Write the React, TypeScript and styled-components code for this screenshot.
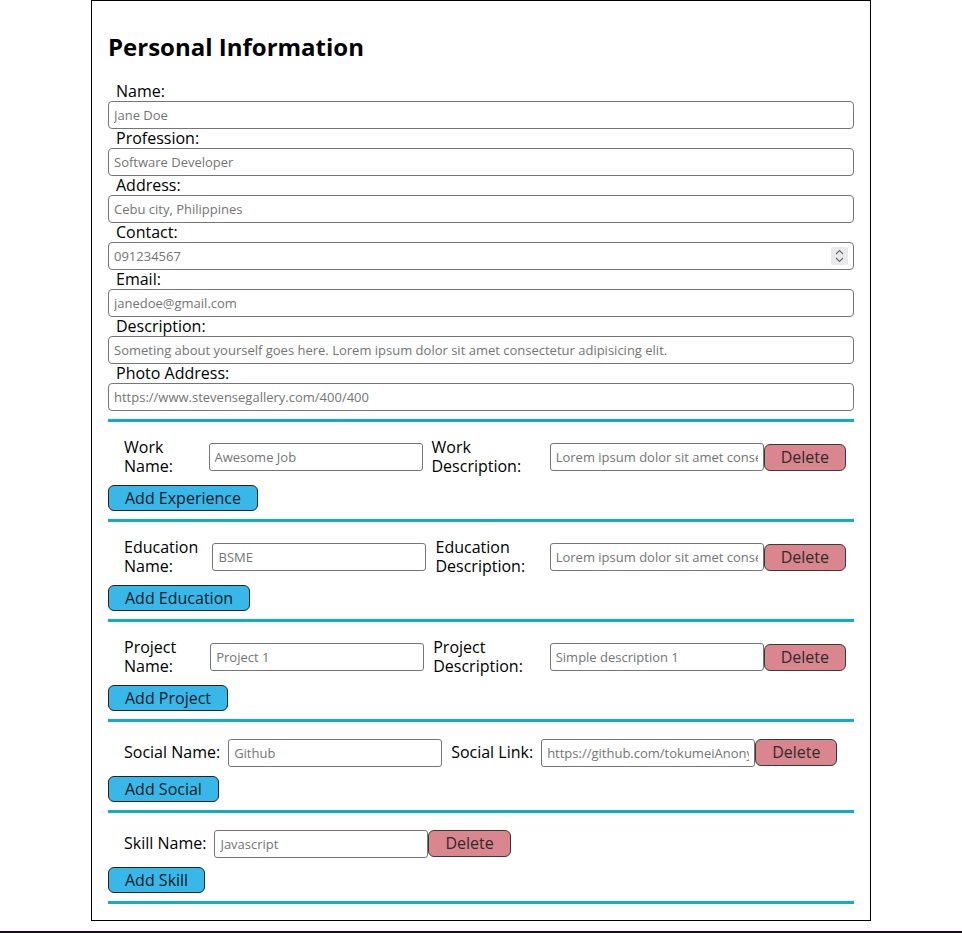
import React from "react";
import styled, { createGlobalStyle } from "styled-components";

const GlobalStyle = createGlobalStyle`
  body {
    margin: 0;
    font-family: "Open Sans", "Noto Sans", sans-serif;
    color: #000;
    background: #fff;
  }
`;

type Entry = {
  key: string;
  first: { label: string; placeholder: string };
  second?: { label: string; placeholder: string };
  addLabel: string;
};

const sections: Entry[] = [
  {
    key: "work",
    first: { label: "Work Name:", placeholder: "Awesome Job" },
    second: {
      label: "Work Description:",
      placeholder: "Lorem ipsum dolor sit amet consectetur",
    },
    addLabel: "Add Experience",
  },
  {
    key: "education",
    first: { label: "Education Name:", placeholder: "BSME" },
    second: {
      label: "Education Description:",
      placeholder: "Lorem ipsum dolor sit amet consectetur",
    },
    addLabel: "Add Education",
  },
  {
    key: "project",
    first: { label: "Project Name:", placeholder: "Project 1" },
    second: { label: "Project Description:", placeholder: "Simple description 1" },
    addLabel: "Add Project",
  },
  {
    key: "social",
    first: { label: "Social Name:", placeholder: "Github" },
    second: {
      label: "Social Link:",
      placeholder: "https://github.com/tokumeiAnonymous",
    },
    addLabel: "Add Social",
  },
  {
    key: "skill",
    first: { label: "Skill Name:", placeholder: "Javascript" },
    addLabel: "Add Skill",
  },
];

const personalFields = [
  { label: "Name:", placeholder: "Jane Doe", type: "text" },
  { label: "Profession:", placeholder: "Software Developer", type: "text" },
  { label: "Address:", placeholder: "Cebu city, Philippines", type: "text" },
  { label: "Contact:", placeholder: "091234567", type: "number" },
  { label: "Email:", placeholder: "janedoe@gmail.com", type: "email" },
  {
    label: "Description:",
    placeholder:
      "Someting about yourself goes here. Lorem ipsum dolor sit amet consectetur adipisicing elit.",
    type: "text",
  },
  {
    label: "Photo Address:",
    placeholder: "https://www.stevensegallery.com/400/400",
    type: "text",
  },
];

// number spinner, drawn so it shows without hover
const Spinner = () => (
  <SpinBox>
    <svg width="9" height="14" viewBox="0 0 9 14" fill="none">
      <path d="M1 5 L4.5 1.5 L8 5" stroke="#6b6b6b" strokeWidth="1.1" />
      <path d="M1 9 L4.5 12.5 L8 9" stroke="#6b6b6b" strokeWidth="1.1" />
    </svg>
  </SpinBox>
);

export default function App() {
  return (
    <>
      <GlobalStyle />
      <FormContainer>
        <Heading>Personal Information</Heading>
        <PersonalSection>
          {personalFields.map((f) => (
            <Field key={f.label}>
              <StackLabel>{f.label}</StackLabel>
              <WideInput type={f.type} placeholder={f.placeholder} />
              {f.type === "number" && <Spinner />}
            </Field>
          ))}
        </PersonalSection>
        {sections.map((s) => (
          <Section key={s.key}>
            <Row>
              <RowLabel>{s.first.label}</RowLabel>
              <RowInput placeholder={s.first.placeholder} />
              {s.second && (
                <>
                  <RowLabel>{s.second.label}</RowLabel>
                  <RowInput placeholder={s.second.placeholder} />
                </>
              )}
              <DeleteButton>Delete</DeleteButton>
            </Row>
            <AddButton>{s.addLabel}</AddButton>
          </Section>
        ))}
      </FormContainer>
      <Preview />
    </>
  );
}

const FormContainer = styled.div`
  width: 780px;
  box-sizing: border-box;
  margin: 0 auto;
  border: 1px solid #000;
  padding: 0 16px 16px;
`;

const Heading = styled.h2`
  font-size: 24px;
  font-weight: bold;
  line-height: 28px;
  margin: 0;
  padding: 32px 0 21px;
`;

const PersonalSection = styled.div`
  padding-bottom: 8px;
  border-bottom: 3px solid #13adbf;
`;

const Field = styled.div`
  position: relative;
`;

const Section = styled.div`
  display: flex;
  flex-direction: column;
  align-items: flex-start;
  gap: 9px;
  padding: 16px 0 8px;
  border-bottom: 3px solid #13adbf;
`;

const StackLabel = styled.label`
  display: block;
  font-size: 16px;
  line-height: 19px;
  padding-left: 8px;
`;

const WideInput = styled.input`
  display: block;
  width: 100%;
  height: 28px;
  box-sizing: border-box;
  margin: 0;
  padding: 0 5px;
  border: 1px solid #767676;
  border-radius: 4px;
  font-family: inherit;
  font-size: 13px;

  &::placeholder {
    color: #757575;
  }
  &::-webkit-inner-spin-button {
    display: none;
  }
`;

const SpinBox = styled.div`
  position: absolute;
  right: 6px;
  bottom: 5px;
  width: 17px;
  height: 18px;
  background: #e9e9ed;
  border-radius: 2px;
  display: flex;
  align-items: center;
  justify-content: center;
  pointer-events: none;
`;

const Row = styled.div`
  display: flex;
  align-items: center;
  align-self: stretch;
  min-height: 29px;
  padding: 0 8px 0 16px;
`;

const RowLabel = styled.label`
  font-size: 16px;
  line-height: 19px;
  margin-right: 8px;
`;

const RowInput = styled.input`
  flex: none;
  width: 214px;
  height: 28px;
  box-sizing: border-box;
  margin: 0;
  padding: 0 5px;
  border: 1px solid #767676;
  border-radius: 3px;
  font-family: inherit;
  font-size: 13px;

  &::placeholder {
    color: #757575;
  }

  & + ${RowLabel} {
    margin-left: 9px;
  }
`;

const BaseButton = styled.button`
  flex: none;
  box-sizing: border-box;
  margin: 0;
  padding: 0 16px;
  border: 1px solid #222;
  border-radius: 6px;
  font-family: inherit;
  font-size: 16px;
  line-height: 19px;
  cursor: pointer;
`;

const DeleteButton = styled(BaseButton)`
  height: 27px;
  background-color: #d9868f;
  color: #2f2a2b;
  border-color: #3a3a3a;
`;

const AddButton = styled(BaseButton)`
  height: 26px;
  background-color: #38b8e8;
  color: #0d1a24;
`;

const Preview = styled.div`
  margin-top: 10px;
  height: 300px;
  background-color: #1d0b1d;
`;
